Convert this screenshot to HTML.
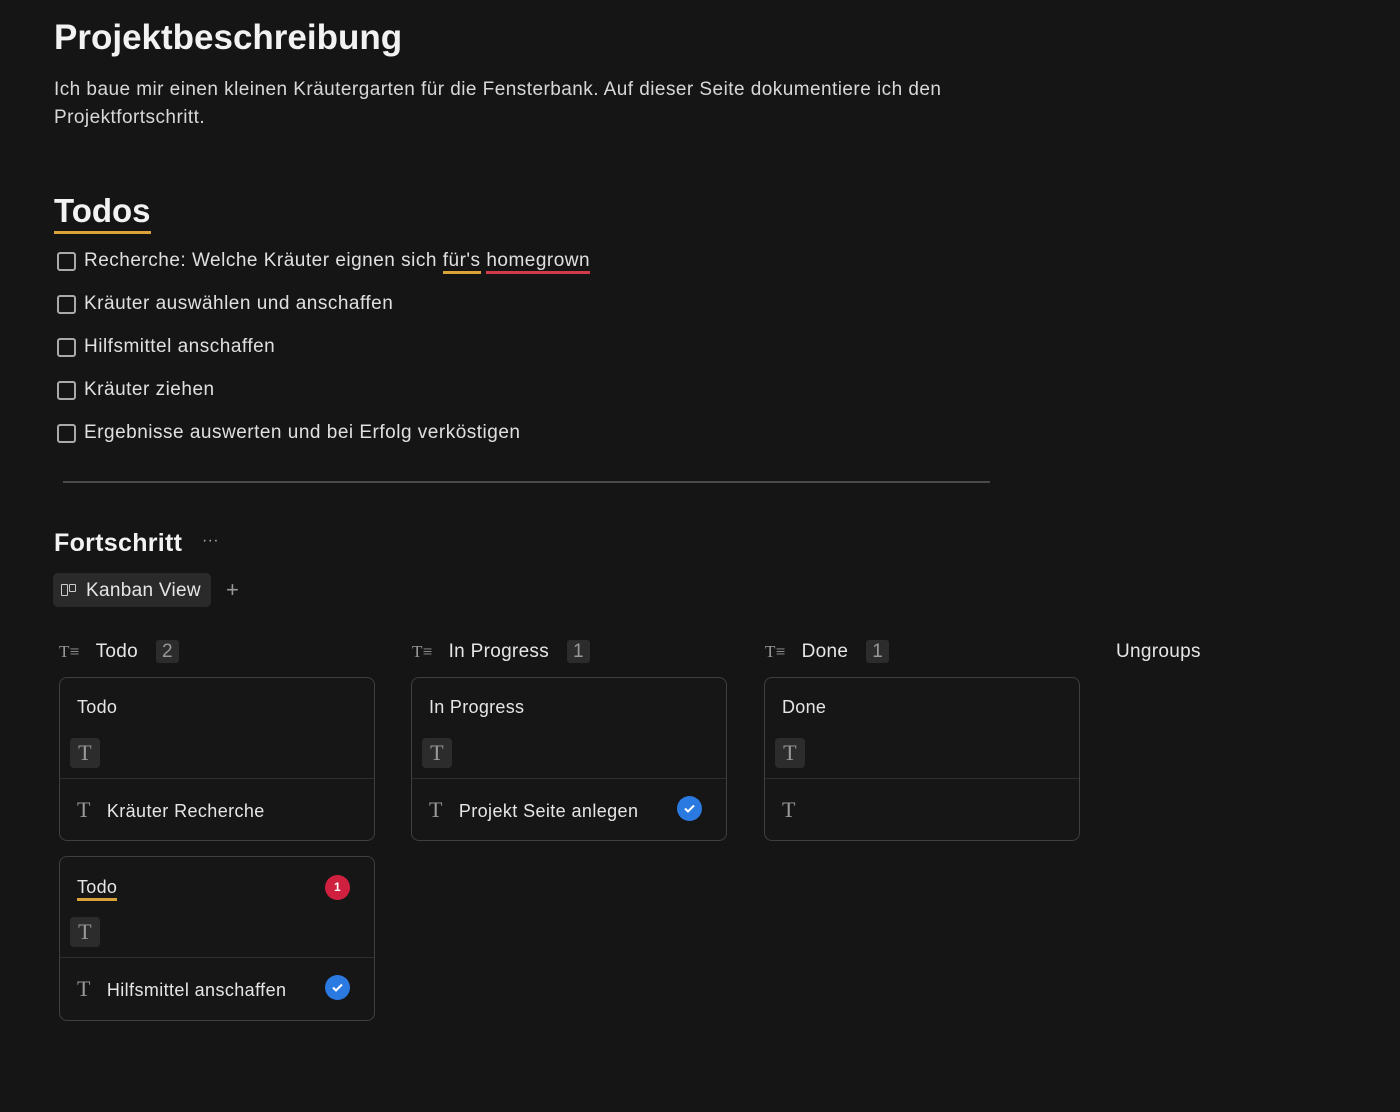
<!DOCTYPE html><html><head><meta charset="utf-8"><style>
body{margin:0;background:#151515;color:#e6e6e6;font-family:"Liberation Sans",sans-serif;width:1400px;height:1112px;overflow:hidden;position:relative;letter-spacing:0.3px}
.a{position:absolute;white-space:nowrap}
h1{position:absolute;left:54px;top:18px;margin:0;font-size:35px;font-weight:bold;color:#f2f2f2;letter-spacing:0}
.p{left:54px;top:76px;font-size:19px;line-height:28px;color:#d8d8d8;white-space:normal;width:940px;letter-spacing:0.45px}
.todos{left:54px;top:191px;font-size:33px;font-weight:bold;color:#f2f2f2;border-bottom:3px solid #d9a33a;line-height:40px;letter-spacing:0}
.cb{position:absolute;width:15px;height:15px;border:2px solid #aaa;border-radius:3px}
.ti{font-size:19px;color:#e0e0e0;letter-spacing:0.5px}
.card{position:absolute;width:314px;border:1px solid #3f3f3f;border-radius:8px;background:#161616}
.card .tt{position:absolute;left:17px;top:19px;font-size:18px}
.tb{position:absolute;left:10px;top:60px;width:30px;height:30px;background:#2c2c2c;border-radius:4px;color:#999;font-family:"Liberation Serif",serif;font-size:22px;text-align:center;line-height:30px}
.dv{position:absolute;left:0;right:0;top:100px;border-top:1px solid #2e2e2e}
.rt{position:absolute;left:17px;top:119px;font-size:18px;letter-spacing:0.4px}
.rt i{font-style:normal;font-family:"Liberation Serif",serif;color:#999;font-size:22px;margin-right:16px}
.chk{position:absolute;right:24px;top:118px;width:25px;height:25px;border-radius:50%;background:#2a7ae2}
.hd{font-size:19px;top:641px}
.hd i{font-style:normal;font-family:"Liberation Serif",serif;color:#999;font-size:17px;margin-right:16px}
.hd b{font-weight:normal;background:#2c2c2c;color:#999;padding:1px 6px;border-radius:3px;margin-left:18px}
</style></head><body>
<h1>Projektbeschreibung</h1>
<div class="a p">Ich baue mir einen kleinen Kräutergarten für die Fensterbank. Auf dieser Seite dokumentiere ich den Projektfortschritt.</div>
<div class="a todos">Todos</div>
<div class="cb" style="left:57px;top:252px"></div><div class="a ti" style="left:84px;top:250px">Recherche: Welche Kräuter eignen sich <span style="border-bottom:3px solid #d9a33a">für's</span> <span style="border-bottom:3px solid #d03a4a">homegrown</span></div>
<div class="cb" style="left:57px;top:295px"></div><div class="a ti" style="left:84px;top:293px">Kräuter auswählen und anschaffen</div>
<div class="cb" style="left:57px;top:338px"></div><div class="a ti" style="left:84px;top:336px">Hilfsmittel anschaffen</div>
<div class="cb" style="left:57px;top:381px"></div><div class="a ti" style="left:84px;top:379px">Kräuter ziehen</div>
<div class="cb" style="left:57px;top:424px"></div><div class="a ti" style="left:84px;top:422px">Ergebnisse auswerten und bei Erfolg verköstigen</div>
<div class="a" style="left:63px;top:481px;width:927px;border-top:2px solid #4a4a4a"></div>
<div class="a" style="left:54px;top:529px;font-size:25px;font-weight:bold;color:#f2f2f2">Fortschritt</div>
<div class="a" style="left:202px;top:532px;color:#aaa;font-size:16px">···</div>
<div class="a" style="left:53px;top:573px;width:158px;height:34px;background:#2a2a2a;border-radius:5px"></div>
<div class="a" style="left:61px;top:584px;width:5px;height:10px;border:1.5px solid #ccc;border-radius:1px"></div>
<div class="a" style="left:69px;top:584px;width:5px;height:6px;border:1.5px solid #ccc;border-radius:1px"></div>
<div class="a" style="left:86px;top:580px;font-size:19px">Kanban View</div>
<div class="a" style="left:226px;top:577px;font-size:22px;color:#999">+</div>
<div class="a hd" style="left:59px"><i>T≡</i>Todo<b>2</b></div>
<div class="a hd" style="left:412px"><i>T≡</i>In Progress<b>1</b></div>
<div class="a hd" style="left:765px"><i>T≡</i>Done<b>1</b></div>
<div class="a hd" style="left:1116px">Ungroups</div>
<div class="card" style="left:59px;top:677px;height:162px"><div class="tt">Todo</div><div class="tb">T</div><div class="dv"></div><div class="rt"><i>T</i>Kräuter Recherche</div></div>
<div class="card" style="left:411px;top:677px;height:162px"><div class="tt">In Progress</div><div class="tb">T</div><div class="dv"></div><div class="rt"><i>T</i>Projekt Seite anlegen</div><div class="chk"><svg width="25" height="25"><path d="M8 12.5l3 3 6-6" stroke="#fff" stroke-width="2" fill="none"/></svg></div></div>
<div class="card" style="left:764px;top:677px;height:162px"><div class="tt">Done</div><div class="tb">T</div><div class="dv"></div><div class="rt"><i>T</i></div></div>
<div class="card" style="left:59px;top:856px;height:163px"><div class="tt" style="border-bottom:3px solid #d9a33a;line-height:22px">Todo</div><div style="position:absolute;right:24px;top:18px;width:25px;height:25px;border-radius:50%;background:#d0203f;color:#fff;font-size:12px;font-weight:bold;text-align:center;line-height:25px">1</div><div class="tb">T</div><div class="dv"></div><div class="rt"><i>T</i>Hilfsmittel anschaffen</div><div class="chk"><svg width="25" height="25"><path d="M8 12.5l3 3 6-6" stroke="#fff" stroke-width="2" fill="none"/></svg></div></div>
</body></html>
